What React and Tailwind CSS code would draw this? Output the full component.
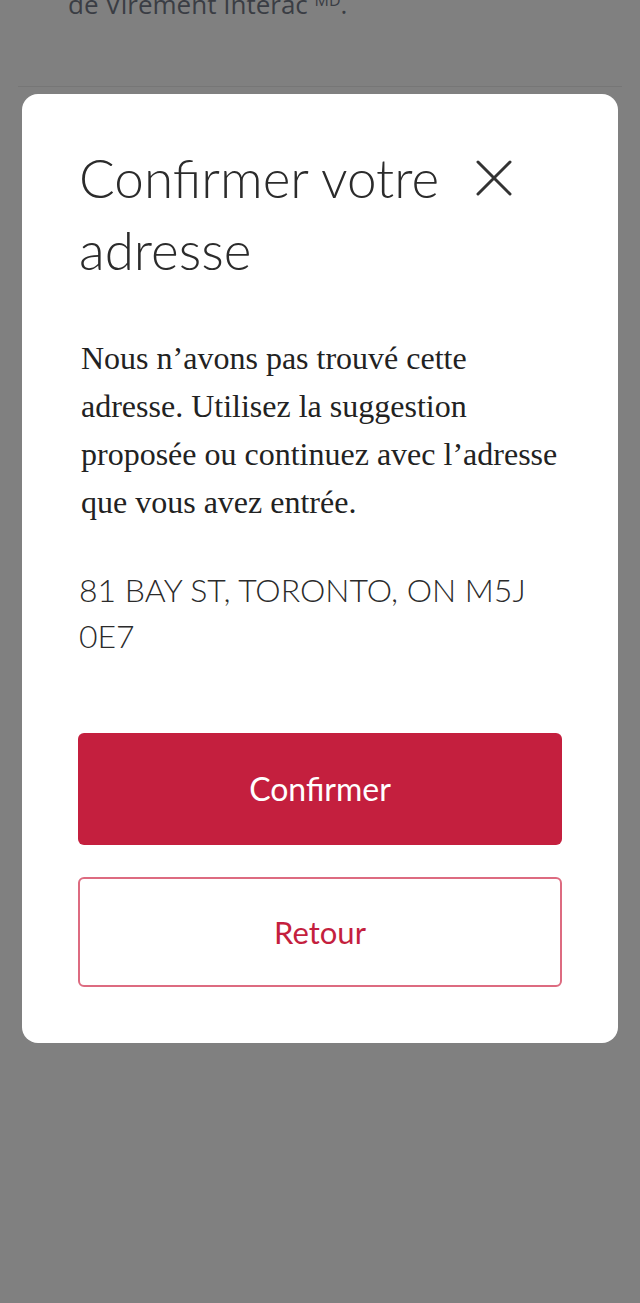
export default function App() {
  return (
    <div className="min-h-[1303px] bg-[#808080] relative overflow-hidden" style={{ fontFamily: "Lato, sans-serif" }}>
      {/* page behind the overlay */}
      <div className="px-[68px] -mt-[14px] text-[26px] leading-[36px] text-[#3a3d44]" style={{ fontFamily: "'Open Sans', sans-serif" }}>
        de Virement Interac <sup className="text-[16px]">MD</sup>.
      </div>
      <div className="mx-[18px] mt-[64px] h-px bg-[#767676]" />

      {/* modal */}
      <div className="mx-[22px] mt-[7px] bg-white rounded-[16px] px-[56px] pt-[48px] pb-[56px]">
        <div className="flex items-start justify-between">
          <h2 className="text-[53px] leading-[72px] font-light text-[#2b2b2b] w-[390px] pl-px">
            Confirmer votre adresse
          </h2>
          <button className="mt-[18px] mr-[50px] text-[#333]">
            <svg width="36" height="36" viewBox="0 0 36 36" fill="none" stroke="currentColor" strokeWidth="3" strokeLinecap="round">
              <path d="M2 2L34 34M34 2L2 34" />
            </svg>
          </button>
        </div>

        <p className="mt-[48px] pl-[3px] text-[32px] leading-[48px] text-[#222]" style={{ fontFamily: "'Liberation Serif', serif" }}>
          Nous n’avons pas trouvé cette adresse. Utilisez la suggestion proposée ou continuez avec l’adresse que vous avez entrée.
        </p>

        <p className="mt-[41px] pl-px text-[32px] leading-[46px] font-light text-[#2b2b2b]">
          81 BAY ST, TORONTO, ON M5J 0E7
        </p>

        <button className="mt-[74px] w-full h-[112px] rounded-[6px] bg-[#c41f3e] text-white text-[32px]">
          Confirmer
        </button>
        <button className="mt-[32px] w-full h-[110px] rounded-[6px] border-2 border-[#dd6b80] bg-white text-[#c41f3e] text-[31px]">
          Retour
        </button>
      </div>
    </div>
  );
}
